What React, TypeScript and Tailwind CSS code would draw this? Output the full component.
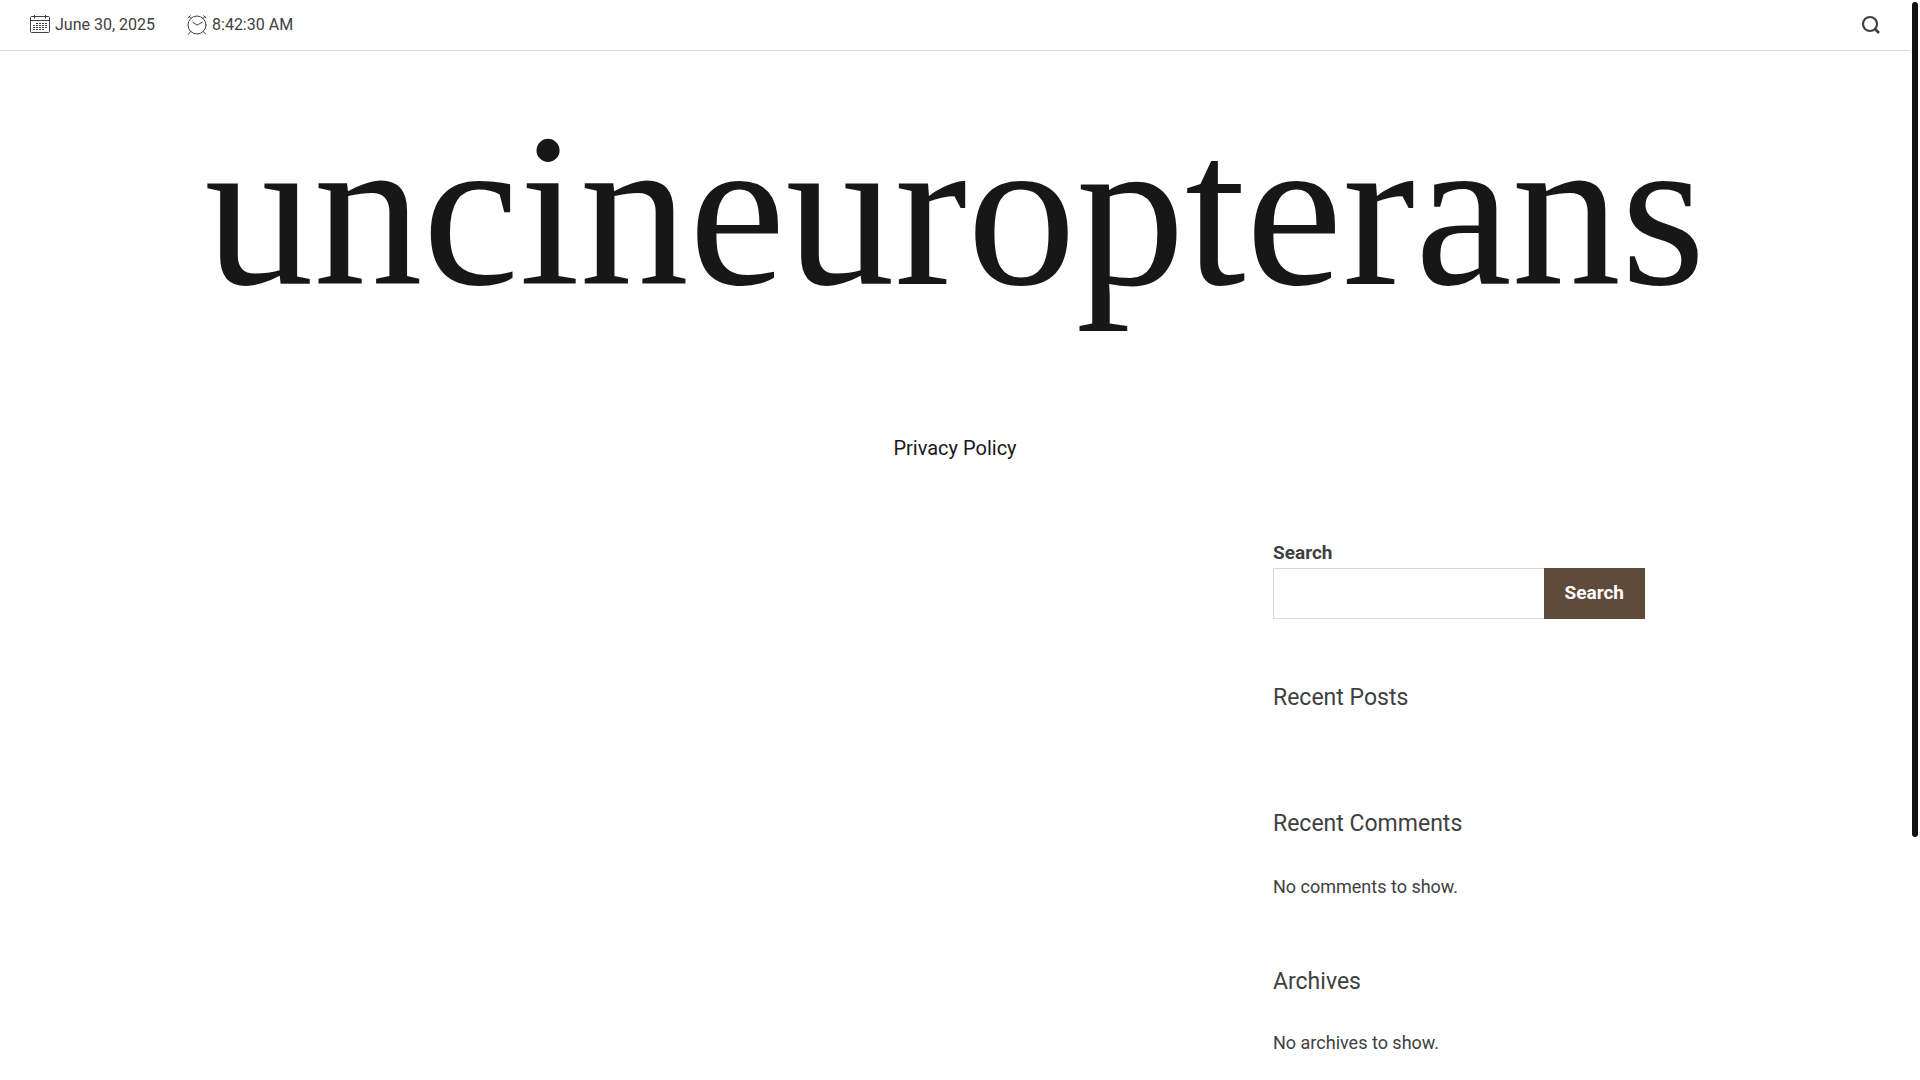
import type { ReactNode } from "react";

function CalendarIcon() {
  return (
    <svg className="size-5" viewBox="0 0 20 20" fill="none" stroke="currentColor" strokeWidth="1" aria-hidden="true">
      <rect x="0.5" y="1.5" width="19" height="16" rx="1" />
      <path d="M0.5 5.5H19.5M4.5 0V3.5M15.5 0V3.5" />
      <path d="M6 8.5H18M3 10.5H18M3 12.5H18M3 14.5H14" strokeDasharray="2 1" />
    </svg>
  );
}

function ClockIcon() {
  return (
    <svg className="size-5" viewBox="0 0 20 20" fill="none" stroke="currentColor" strokeWidth="1" strokeLinecap="round" aria-hidden="true">
      <circle cx="10" cy="10" r="9" />
      <path d="M5.8 7.2L10 10.2L15.2 7.2" />
      <path d="M1 3L3.4 0.8M16.6 0.8L19 3M2.2 1.6L4 3.4M17.8 1.6L16 3.4M3.6 16.6L1.4 19.2M16.4 16.6L18.6 19.2" />
    </svg>
  );
}

function SearchIcon() {
  return (
    <svg className="size-5" viewBox="0 0 20 20" fill="none" stroke="currentColor" aria-hidden="true">
      <circle cx="10" cy="9" r="7" strokeWidth="2.2" />
      <path d="M15 14L19 18" strokeWidth="2.6" />
    </svg>
  );
}

function Widget({ title, children }: { title: string; children?: ReactNode }) {
  return (
    <section>
      <h2 className="text-[23px] leading-8">{title}</h2>
      {children}
    </section>
  );
}

export default function App() {
  return (
    <div className="min-h-screen bg-white pr-2.5 font-['Roboto',sans-serif] text-[#404040]">
      <header>
        <div className="flex h-[51px] items-center justify-between border-b border-[#d9d9d9] px-[30px]">
          <div className="flex items-center gap-8 text-base leading-6">
            <div className="flex items-center gap-[5px]">
              <CalendarIcon />
              <span>June 30, 2025</span>
            </div>
            <div className="flex items-center gap-[5px]">
              <ClockIcon />
              <span>8:42:30 AM</span>
            </div>
          </div>
          <button type="button" aria-label="Open search">
            <SearchIcon />
          </button>
        </div>
        <h1 className="pt-[52px] text-center font-['Liberation_Serif',serif] text-[218px] leading-[216px] text-[#171717]">
          <a href="#">uncineuropterans</a>
        </h1>
        <nav className="mt-[114px] flex justify-center" aria-label="Primary">
          <a href="#" className="text-xl leading-[30px] text-[#171717]">Privacy Policy</a>
        </nav>
      </header>
      <main className="mx-auto flex max-w-[1380px] justify-end pt-[75px]">
        <aside className="w-[372px]">
          <form role="search" onSubmit={(event) => event.preventDefault()}>
            <label htmlFor="site-search" className="block text-[19px] leading-[30px] font-bold">Search</label>
            <div className="flex h-[51px]">
              <input id="site-search" type="search" className="min-w-0 flex-1 border border-r-0 border-[#d9d9d9] px-3 outline-none" />
              <button type="submit" className="bg-[#5f4b3a] px-[21px] text-[19px] font-bold text-white">Search</button>
            </div>
          </form>
          <div className="mt-[63px] flex flex-col">
            <Widget title="Recent Posts" />
            <div className="mt-[94px]">
              <Widget title="Recent Comments">
                <p className="mt-8 text-lg leading-[30px]">No comments to show.</p>
              </Widget>
            </div>
            <div className="mt-16">
              <Widget title="Archives">
                <p className="mt-[30px] text-lg leading-[30px]">No archives to show.</p>
              </Widget>
            </div>
          </div>
        </aside>
      </main>
      <div className="fixed top-0.5 right-0.5 h-[835px] w-1.5 rounded-full bg-[#111111]" aria-hidden="true" />
    </div>
  );
}
